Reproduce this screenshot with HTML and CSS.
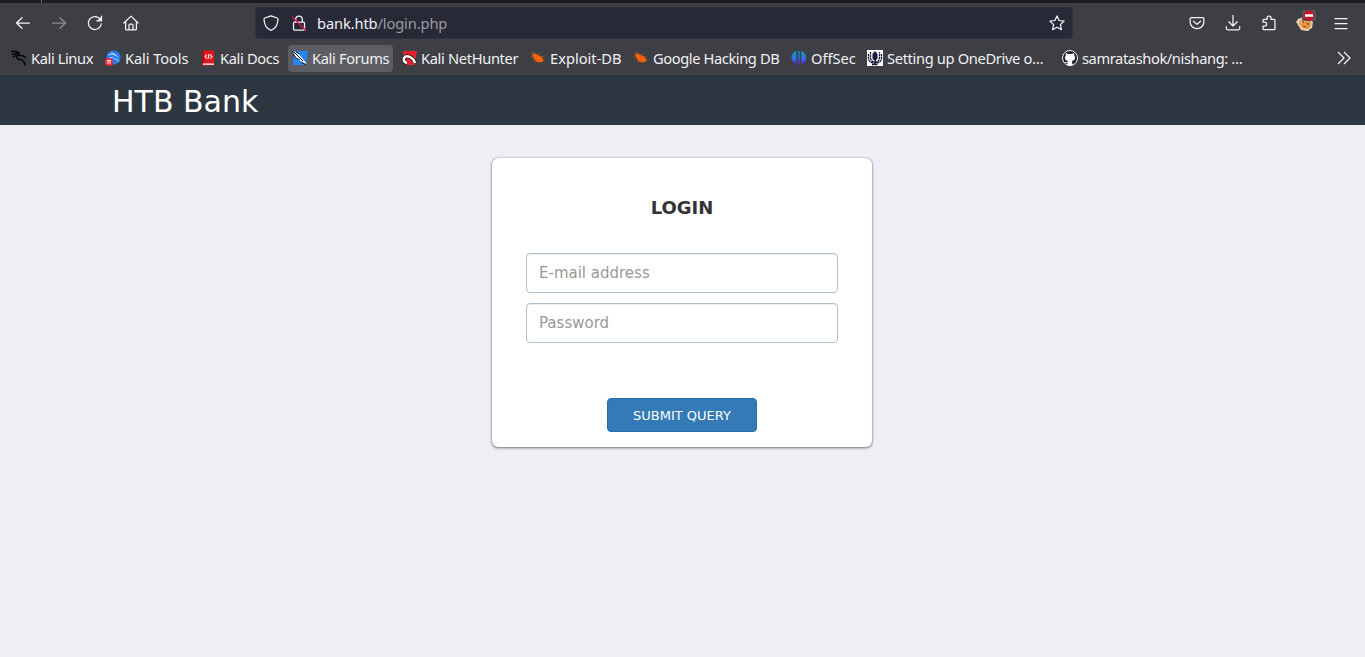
FILE: index.html
```html
<!DOCTYPE html>
<html lang="en">
<head>
<meta charset="utf-8">
<title>HTB Bank</title>
<link rel="stylesheet" href="styles.css">
</head>
<body>
<div class="browser">
  <div class="tabstrip"><span class="tabsep"></span></div>
  <div class="toolbar">
    <div class="nav">
      <svg class="tool" viewBox="0 0 16 16"><path d="M14.500 8H1.500M7 2.700 1.500 8 7 13.300"/></svg>
      <svg class="tool dim" viewBox="0 0 16 16"><path d="M1.500 8h13M9 2.700 14.500 8 9 13.300"/></svg>
      <svg class="tool" viewBox="0 0 16 16"><path d="M14.300 8.800A6.500 6.500 0 1 1 12.700 3.700L14.300 5.300M14.500 1v4.800H9.700"/><path class="solid" d="M14.500 1.500v4h-4z"/></svg>
      <svg class="tool" viewBox="0 0 16 16"><path d="M.9 8 8 1.100 15.100 8M2.600 6.800v7.100q0 1 1 1h8.800q1 0 1-1V6.800M6 14.500V10q0-1 1-1h2q1 0 1 1v4.500"/></svg>
    </div>
    <div class="urlbar">
      <svg class="tool shield" viewBox="0 0 16 16"><path d="M8 .8 14.300 3q.7.3.7 1C14.800 9.200 13.300 13.500 8 15.300 2.700 13.500 1.200 9.200 1 4q0-.7.7-1z"/></svg>
      <svg class="tool" viewBox="0 0 16 16"><path d="M4.700 7V4.300a3.300 3.300 0 0 1 6.600 0V7M3.500 7h9q1 0 1 1v6q0 1-1 1h-9q-1 0-1-1V8q0-1 1-1z"/><path class="slash" d="M1.500 2.300 14.500 15"/></svg>
      <span class="url">bank.htb<span>/login.php</span></span>
      <svg class="tool star" viewBox="0 0 16 16"><path d="m8 .9 2.100 4.600 5 .6-3.700 3.500 1 5.100L8 12.200l-4.400 2.500 1-5.100L.9 6.100l5-.6z"/></svg>
    </div>
    <div class="actions">
      <svg class="tool" viewBox="0 0 16 16"><path d="M2.200 2.600h11.600q1 0 1 1v3.600a6.800 6.500 0 0 1-13.600 0V3.600q0-1 1-1zM4.500 6.200 8 9.400l3.500-3.200"/></svg>
      <svg class="tool" viewBox="0 0 16 16"><path d="M8 .5v10.300M3.800 6.800 8 11l4.200-4.200M1.300 11.500v1.800q0 1.500 1.500 1.500h10.400q1.500 0 1.500-1.500v-1.800"/></svg>
      <svg class="tool" viewBox="0 0 16 16"><path d="M2 7V5.300q0-1 1-1h3V3a2 2 0 0 1 4 0v1.300h3q1 0 1 1v8.400q0 1-1 1H3q-1 0-1-1V11h1.600a2 2 0 0 0 0-4z"/></svg>
      <svg class="cookie" viewBox="0 0 20 22"><path fill="#d9d0c4" d="M0 12 2 9l8-3 7 6-1 6-5 3-6-1-3-5z"/><circle cx="9" cy="14" r="6" fill="#ed9344"/><path d="m1 12 6-4 3 2-5 3M3 15l4 4 6 1" fill="none" stroke="#f5d0a5" stroke-width="1.500"/><path d="M6 12h2m3 2h2M7 16l3 1" stroke="#8d512a" stroke-width="1.300"/><rect x="6" y="0" width="14" height="11" rx="2" fill="#555357"/><circle cx="13" cy="5.500" r="5.200" fill="#c5152d"/><path d="M9 5.500h8" stroke="#fff" stroke-width="2.500"/></svg>
      <svg class="tool" viewBox="0 0 16 16"><path d="M2 3.500h12M2 8.500h12M2 13.500h12"/></svg>
    </div>
  </div>
  <div class="bookmarks">
    <div class="mark tight"><svg viewBox="0 0 16 16"><path d="M0 1.500q5-1 9 2M1 4.500q4-1.500 7-.5M2 7q3-2.500 8-1.500 3 0 5 2.500M7 5q-3 4 2 4.500 4.500.5 5 6" fill="none" stroke="#050505" stroke-width="1.500"/></svg><span>Kali Linux</span></div>
    <div class="mark even"><svg viewBox="0 0 16 16"><circle cx="8.500" cy="7.500" r="7" fill="#267bf4"/><path d="M3 5q4-2 7 0l3 2M4 8q4-2 6 1 3 0 4 3M6 3q4 0 6 3" fill="none" stroke="#b9dcff" stroke-width=".9"/><circle cx="4" cy="12" r="4" fill="#f02b35"/><path d="M2 10.500h4M3 10.500V14m2-3.500V14" stroke="#fff" stroke-width=".9"/></svg><span>Kali Tools</span></div>
    <div class="mark snug docs"><svg viewBox="0 0 16 16"><path d="M2 .5h12v15H2z" fill="#df1720"/><path d="M2 .5h2v13H2z" fill="#a80e19"/><path d="M3 13.300h11v1.700H3z" fill="#e4c8c8"/><path d="M6.800 4.500 5 6.500l1.800 2m3.400-4 1.800 2-1.800 2M9 4l-1 5" fill="none" stroke="#fff" stroke-width="1.100"/></svg><span>Kali Docs</span></div>
    <div class="mark active snug"><svg viewBox="0 0 16 16"><path d="M2 1h14l-2.500 14H1z" fill="#2585f5"/><path d="m1 1 5 2 4 5 5 6-5-2-6-4z" fill="#fff"/><path d="M0 1 3 3l8 8M1 4l3 4 4 2M9 12l5 3M4 2l3 2" fill="none" stroke="#171a20" stroke-width="1"/></svg><span>Kali Forums</span></div>
    <div class="mark snug"><svg viewBox="0 0 16 16"><path d="M2 1h14l-2.500 14H4z" fill="#ee1e2d"/><path d="M6 13q-4-1-3-5 2-3 6-1 4 2 5 6" fill="none" stroke="#17181c" stroke-width="4"/><path d="M6 13q-4-1-3-5 2-3 6-1 4 2 5 6" fill="none" stroke="#fff" stroke-width="2.500"/></svg><span>Kali NetHunter</span></div>
    <div class="mark"><svg viewBox="0 0 16 16"><path d="m2 4.500 3-1L8 5l3 1.500 2.500 3-1 2.500-4 .5-3.500-2L3 7z" fill="#f2630c"/><path d="M1 3h4M3 11l3-2m-1 4 3-3m1-5 1-2m1 4 3-1m-2 4 3 1M0 7h4" stroke="#c65318" stroke-width=".7"/></svg><span>Exploit-DB</span></div>
    <div class="mark tight"><svg viewBox="0 0 16 16"><path d="m2 4.500 3-1L8 5l3 1.500 2.500 3-1 2.500-4 .5-3.500-2L3 7z" fill="#f2630c"/><path d="M1 3h4M3 11l3-2m-1 4 3-3m1-5 1-2m1 4 3-1m-2 4 3 1M0 7h4" stroke="#c65318" stroke-width=".7"/></svg><span>Google Hacking DB</span></div>
    <div class="mark"><svg viewBox="0 0 16 16"><defs><linearGradient id="wave" gradientUnits="userSpaceOnUse" x1="0" y1="1" x2="0" y2="15"><stop stop-color="#109bb4"/><stop offset=".5" stop-color="#2875ed"/><stop offset="1" stop-color="#6821bd"/></linearGradient></defs><path fill="url(#wave)" d="M5.500 1v13Q.5 12.500.5 7.500T5.500 1zM7.200 1h1.400v14.500H7.200zM10.300 1q4.700 1.500 4.700 6.500T10.300 14z"/></svg><span>OffSec</span></div>
    <div class="mark snug"><svg viewBox="0 0 16 16"><path fill="#fff" d="M0 0h16v16H0z"/><path d="M8 1 10.500 4v4.500L8 11 5.500 8.500V4z" fill="#14183c"/><path d="M3.500 2v6q.5 4 4.500 4t4.500-4V2M1.500 4v5q1 4 6.500 4t6.500-4V4M8 10v5M5 14.500h6" fill="none" stroke="#14183c" stroke-width="1.300" stroke-dasharray="2.500 .5"/></svg><span>Setting up OneDrive o…</span></div>
    <div class="mark tight"><svg viewBox="0 0 16 16"><circle cx="8" cy="8" r="7.500" fill="#20242a" stroke="#f3f3f3"/><path fill="#fff" d="m4 3 2 1h4l2-1 .4 2.500q2 4.500-2.400 5.500l.5 4.500h-5V13Q3 13.500 3 11.500q1 1 2.600.5L6 11Q1.700 10 3.600 5.500z"/></svg><span>samratashok/nishang: …</span></div>
    <svg class="more" viewBox="0 0 14 14"><path d="m1 1 6 6-6 6m6-12 6 6-6 6"/></svg>
  </div>
</div>
<header class="site-header"><span class="brand">HTB Bank</span></header>
<main class="page">
  <form class="login">
    <h1>LOGIN</h1>
    <input type="text" placeholder="E-mail address">
    <input type="password" placeholder="Password">
    <button type="button">SUBMIT QUERY</button>
  </form>
</main>
</body>
</html>
```
FILE: styles.css
```css
* { box-sizing: border-box; }
body { margin: 0; height: 657px; overflow: hidden; background: #eeeff4; font-family: "DejaVu Sans", sans-serif; }
.browser { height: 75px; background: #3e3f44; border-bottom: 1px solid #45474d; color: #f1f1f4; font-family: "Noto Sans", sans-serif; font-size: 14.67px; }
.tabstrip { height: 3px; background: #1c1b22; padding-left: 41px; }
.tabsep { display: block; width: 1px; height: 3px; background: #65656d; }
.toolbar { height: 40px; display: flex; align-items: center; padding: 0 16px 0 15px; }
.nav, .actions { display: flex; align-items: center; gap: 20px; }
.actions { margin-left: auto; }
.tool { width: 16px; height: 16px; flex: none; fill: none; stroke: #f4f4f6; stroke-width: 1.25; stroke-linecap: round; stroke-linejoin: round; }
.tool .solid { fill: #f4f4f6; stroke: none; }
.tool .slash { stroke: #e3194d; stroke-width: 1.3; }
.dim { opacity: .42; }
.cookie { width: 20px; height: 22px; margin: -4px -3px 0 -1px; }
.urlbar { width: 818px; height: 32px; margin-left: 116px; padding: 0 7px; display: flex; align-items: center; border: 1px solid #30313b; border-radius: 4px; background: #282936; }
.shield { margin-right: 12px; }
.url { margin-left: 10px; line-height: 20px; letter-spacing: -.12px; }
.url span { color: #9b9ba3; }
.star { margin-left: auto; }
.bookmarks { height: 30px; padding-left: 7px; display: grid; grid-template-columns: 94px 96px 91px 109px 129px 103px 158px 76px 195px 273px 20px; align-items: center; }
.mark { height: 27px; padding-left: 4px; display: flex; align-items: center; gap: 4px; white-space: nowrap; }
.mark svg { width: 16px; height: 16px; flex: none; }
.tight { letter-spacing: -.4px; }
.snug { letter-spacing: -.34px; }
.even { letter-spacing: -.1px; }
.docs { padding-left: 3px; }
.active { width: 105px; background: #5d5e63; border-radius: 4px; }
.more { width: 14px; height: 14px; margin-left: 6px; fill: none; stroke: #f1f1f4; stroke-width: 1.3; }
.site-header { height: 50px; padding: 1px 112px 0; background: #2d3741; color: #fff; }
.brand { font-size: 30px; line-height: 52px; }
.page { display: flex; justify-content: center; padding-top: 33px; }
.login { width: 380px; height: 289px; margin-right: 1px; padding: 37px 34px 15px; display: flex; flex-direction: column; background: #fff; border-radius: 6px; box-shadow: 0 1px 3px rgba(0,0,0,.5), 0 0 1px rgba(0,0,0,.5); }
h1 { margin: 0 0 32px; font-size: 18px; line-height: 26px; text-align: center; color: #333; }
input { width: 312px; height: 40px; margin: 0 0 10px; padding: 0 12px; border: 1px solid #b0bfc9; border-radius: 4px; font: 15px "DejaVu Sans", sans-serif; box-shadow: inset 0 1px 1px rgba(0,0,0,.075); }
input::placeholder { color: #999; opacity: 1; }
button { width: 150px; height: 34px; margin: auto auto 0; padding: 1px 0 0; border: 1px solid #286da6; border-radius: 4px; background: #337ab7; color: #fff; font: 13px "DejaVu Sans", sans-serif; }
```
